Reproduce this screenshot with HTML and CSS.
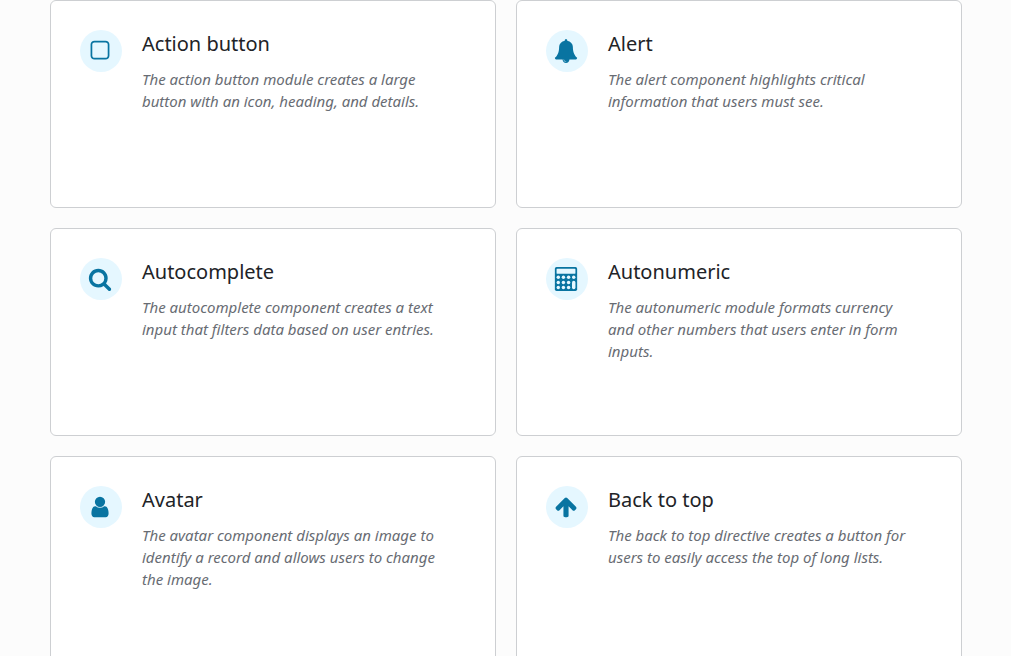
FILE: index.html
```html
<!DOCTYPE html>
<html lang="en">
<head>
<meta charset="utf-8">
<meta name="viewport" content="width=device-width, initial-scale=1">
<title>Components</title>
<link rel="stylesheet" href="styles.css">
</head>
<body>
<main class="showcase">
  <article class="card">
    <span class="badge"><svg class="icon" viewBox="0 0 1792 1792" aria-hidden="true"><path d="M1312 256h-832q-66 0-113 47t-47 113v832q0 66 47 113t113 47h832q66 0 113-47t47-113v-832q0-66-47-113t-113-47zm288 160v832q0 119-84.500 203.500t-203.500 84.500h-832q-119 0-203.500-84.500t-84.500-203.500v-832q0-119 84.500-203.500t203.500-84.500h832q119 0 203.500 84.500t84.500 203.500z"/></svg></span>
    <div class="content">
      <h2 class="title">Action button</h2>
      <p class="summary">The action button module creates a large button with an icon, heading, and details.</p>
    </div>
  </article>
  <article class="card">
    <span class="badge"><svg class="icon" viewBox="0 0 1792 1792" aria-hidden="true"><path d="M912 1696q0-16-16-16-59 0-101.500-42.500t-42.500-101.500q0-16-16-16t-16 16q0 73 51.500 124.500t124.500 51.500q16 0 16-16zm816-288q0 52-38 90t-90 38h-448q0 106-75 181t-181 75-181-75-75-181h-448q-52 0-90-38t-38-90q50-42 91-88t85-119.500 74.500-158.500 50-206 19.500-260q0-152 117-282.500t307-158.500q-8-19-8-39 0-40 28-68t68-28 68 28 28 68q0 20-8 39 190 28 307 158.500t117 282.500q0 139 19.500 260t50 206 74.500 158.500 85 119.500 91 88z"/></svg></span>
    <div class="content">
      <h2 class="title">Alert</h2>
      <p class="summary">The alert component highlights critical information that users must see.</p>
    </div>
  </article>
  <article class="card">
    <span class="badge"><svg class="icon" viewBox="0 0 1792 1792" aria-hidden="true"><path d="M1216 832q0-185-131.500-316.500t-316.500-131.500-316.500 131.500-131.500 316.500 131.500 316.500 316.500 131.500 316.500-131.500 131.500-316.500zm512 832q0 52-38 90t-90 38q-54 0-90-38l-343-342q-179 124-399 124-143 0-273.500-55.500t-225-150-150-225-55.500-273.500 55.500-273.500 150-225 225-150 273.500-55.500 273.500 55.500 225 150 150 225 55.500 273.500q0 220-124 399l343 343q37 37 37 90z"/></svg></span>
    <div class="content">
      <h2 class="title">Autocomplete</h2>
      <p class="summary">The autocomplete component creates a text input that filters data based on user entries.</p>
    </div>
  </article>
  <article class="card">
    <span class="badge"><svg class="icon" viewBox="0 0 1792 1792" aria-hidden="true"><rect x="64" y="0" width="1664" height="1792" rx="128"/><g class="keys"><rect x="192" y="128" width="1408" height="384" rx="64"/><circle cx="320" cy="768" r="128"/><circle cx="704" cy="768" r="128"/><circle cx="1088" cy="768" r="128"/><circle cx="1472" cy="768" r="128"/><circle cx="320" cy="1152" r="128"/><circle cx="704" cy="1152" r="128"/><circle cx="1088" cy="1152" r="128"/><circle cx="320" cy="1536" r="128"/><circle cx="704" cy="1536" r="128"/><circle cx="1088" cy="1536" r="128"/><rect x="1344" y="1024" width="256" height="640" rx="128"/></g></svg></span>
    <div class="content">
      <h2 class="title">Autonumeric</h2>
      <p class="summary">The autonumeric module formats currency and other numbers that users enter in form inputs.</p>
    </div>
  </article>
  <article class="card">
    <span class="badge"><svg class="icon" viewBox="0 0 1792 1792" aria-hidden="true"><path d="M1536 1399q0 109-62.500 187t-150.500 78h-854q-88 0-150.500-78t-62.500-187q0-85 8.500-160.500t31.500-152 58.500-131 94-89 134.500-34.500q131 128 313 128t313-128q76 0 134.500 34.500t94 89 58.500 131 31.500 152 8.500 160.500zm-256-887q0 159-112.500 271.500t-271.500 112.500-271.500-112.500-112.500-271.500 112.500-271.500 271.500-112.500 271.500 112.500 112.500 271.500z"/></svg></span>
    <div class="content">
      <h2 class="title">Avatar</h2>
      <p class="summary">The avatar component displays an image to identify a record and allows users to change the image.</p>
    </div>
  </article>
  <article class="card">
    <span class="badge"><svg class="icon" viewBox="0 0 1792 1792" aria-hidden="true"><path d="M1675 971q0 51-37 90l-75 75q-38 38-91 38-54 0-90-38l-294-293v704q0 52-37.500 84.500t-90.500 32.500h-128q-53 0-90.500-32.500t-37.500-84.500v-704l-294 293q-36 38-90 38t-90-38l-75-75q-38-38-38-90 0-53 38-91l651-651q35-37 90-37 54 0 91 37l651 651q37 39 37 91z"/></svg></span>
    <div class="content">
      <h2 class="title">Back to top</h2>
      <p class="summary">The back to top directive creates a button for users to easily access the top of long lists.</p>
    </div>
  </article>
</main>
</body>
</html>
```
FILE: styles.css
```css
* {
  box-sizing: border-box;
}

body {
  margin: 0;
  background: #fcfcfc;
  color: #212327;
  font-family: "Noto Sans", "Open Sans", sans-serif;
}

.showcase {
  display: grid;
  grid-template-columns: repeat(2, minmax(0, 1fr));
  grid-auto-rows: minmax(208px, auto);
  gap: 20px;
  padding: 0 49px 20px 50px;
}

.card {
  display: flex;
  align-items: flex-start;
  gap: 20px;
  padding: 29px 44px 29px 29px;
  background: #fff;
  border: 1px solid #cdcfd2;
  border-radius: 6px;
}

.badge {
  display: flex;
  flex: none;
  align-items: center;
  justify-content: center;
  width: 42px;
  height: 42px;
  padding-right: 2px;
  border-radius: 50%;
  background: #e5f7ff;
}

.icon {
  width: 24px;
  height: 24px;
  fill: #0974a1;
}

.keys {
  fill: #e5f7ff;
}

.content {
  flex: 1;
  min-width: 0;
}

.title {
  margin: 0 0 10px;
  font-size: 20px;
  font-weight: 400;
  line-height: 28px;
}

.summary {
  margin: 0;
  color: #686c73;
  font-size: 15px;
  font-style: italic;
  line-height: 22px;
}
```
